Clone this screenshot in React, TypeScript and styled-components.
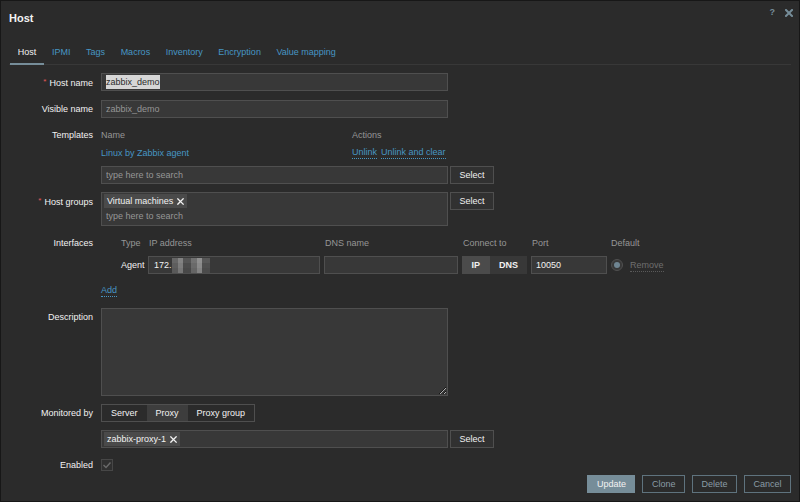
import React from 'react'
import styled, { createGlobalStyle, css } from 'styled-components'

const GlobalStyle = createGlobalStyle`
   html, body {
      margin: 0;
      padding: 0;
      background: #2b2b2b;
   }
   body {
      font-family: "Liberation Sans", Arial, sans-serif;
      font-size: 9px;
      color: #f2f2f2;
   }
   * { box-sizing: border-box; }
`

const tabs = ['Host', 'IPMI', 'Tags', 'Macros', 'Inventory', 'Encryption', 'Value mapping']

function CloseIcon({ size = 8, color = '#768d99', width = 2 }: { size?: number; color?: string; width?: number }) {
   return (
      <svg width={size} height={size} viewBox="0 0 8 8">
         <path d="M1 1 L7 7 M7 1 L1 7" stroke={color} strokeWidth={width} strokeLinecap="square" />
      </svg>
   )
}

function Tag({ label }: { label: string }) {
   return (
      <TagChip>
         {label}
         <CloseIcon size={7} color="#f2f2f2" width={1.6} />
      </TagChip>
   )
}

export default function App() {
   return (
      <>
         <GlobalStyle />
         <Dialog>
            <Header>
               <Title>Host</Title>
               <HeaderActions>
                  <HelpMark>?</HelpMark>
                  <CloseIcon />
               </HeaderActions>
            </Header>

            <TabList>
               {tabs.map((t, i) => (
                  <Tab key={t} $active={i === 0}>{t}</Tab>
               ))}
            </TabList>

            <Form>
               <Label><Required>*</Required>Host name</Label>
               <SelectedBox><Selection>zabbix_demo</Selection></SelectedBox>

               <Label>Visible name</Label>
               <TextInput readOnly placeholder="zabbix_demo" />

               <Label>Templates</Label>
               <div>
                  <TemplateGrid>
                     <HeadCell>Name</HeadCell>
                     <HeadCell>Actions</HeadCell>
                     <TemplateLink>Linux by Zabbix agent</TemplateLink>
                     <ActionLinks>
                        <DottedLink>Unlink</DottedLink>
                        <DottedLink>Unlink and clear</DottedLink>
                     </ActionLinks>
                  </TemplateGrid>
                  <FieldRow $top={4}>
                     <TextInput readOnly placeholder="type here to search" />
                     <SelectButton>Select</SelectButton>
                  </FieldRow>
               </div>

               <Label><Required>*</Required>Host groups</Label>
               <FieldRow>
                  <MultiSelect>
                     <TagRow><Tag label="Virtual machines" /></TagRow>
                     <MultiPlaceholder>type here to search</MultiPlaceholder>
                  </MultiSelect>
                  <SelectButton>Select</SelectButton>
               </FieldRow>

               <Label>Interfaces</Label>
               <InterfaceGrid>
                  <HeadCell $indent={20}>Type</HeadCell>
                  <HeadCell $indent={1}>IP address</HeadCell>
                  <HeadCell $indent={1}>DNS name</HeadCell>
                  <HeadCell $indent={1}>Connect to</HeadCell>
                  <HeadCell $indent={1}>Port</HeadCell>
                  <HeadCell>Default</HeadCell>

                  <TypeCell>Agent</TypeCell>
                  <FakeInput>172.<Censor /></FakeInput>
                  <TextInput readOnly defaultValue="" />
                  <Toggle>
                     <ToggleItem $active>IP</ToggleItem>
                     <ToggleItem>DNS</ToggleItem>
                  </Toggle>
                  <TextInput readOnly defaultValue="10050" />
                  <DefaultCell>
                     <Radio />
                     <RemoveLink>Remove</RemoveLink>
                  </DefaultCell>
               </InterfaceGrid>

               <span />
               <AddRow><DottedLink>Add</DottedLink></AddRow>

               <Label>Description</Label>
               <TextArea readOnly />

               <Label>Monitored by</Label>
               <Segmented>
                  <Segment>Server</Segment>
                  <Segment $active>Proxy</Segment>
                  <Segment>Proxy group</Segment>
               </Segmented>

               <span />
               <FieldRow>
                  <MultiSelect $single>
                     <TagRow><Tag label="zabbix-proxy-1" /></TagRow>
                  </MultiSelect>
                  <SelectButton>Select</SelectButton>
               </FieldRow>

               <Label>Enabled</Label>
               <CheckRow>
                  <CheckBox>
                     <svg width="10" height="10" viewBox="0 0 10 10">
                        <path d="M1.5 5 L4 7.5 L8.5 2.5" fill="none" stroke="#6a6a6a" strokeWidth="1.4" />
                     </svg>
                  </CheckBox>
               </CheckRow>
            </Form>

            <Footer>
               <FooterButton $primary>Update</FooterButton>
               <FooterButton>Clone</FooterButton>
               <FooterButton>Delete</FooterButton>
               <FooterButton>Cancel</FooterButton>
            </Footer>
         </Dialog>
      </>
   )
}


const Dialog = styled.div`
   width: 800px;
   height: 502px;
   display: flex;
   flex-direction: column;
   background: #2b2b2b;
   border: 1px solid #171717;
   overflow: hidden;
`

const Header = styled.div`
   display: flex;
   justify-content: space-between;
   align-items: flex-start;
   height: 40px;
   padding: 0 6px 0 8px;
`

const Title = styled.h4`
   margin: 9px 0 0;
   font-size: 11px;
   line-height: 16px;
   font-weight: bold;
   color: #f2f2f2;
`

const HeaderActions = styled.div`
   display: flex;
   align-items: center;
   gap: 10px;
   margin-top: 7px;
   height: 9px;
`

const HelpMark = styled.span`
   font-size: 9px;
   font-weight: bold;
   line-height: 9px;
   color: #768d99;
`

const TabList = styled.div`
   display: flex;
   margin: 0 8px;
   padding-left: 1px;
   border-bottom: 1px solid #383838;
`

const Tab = styled.div<{ $active?: boolean }>`
   height: 24px;
   line-height: 22px;
   padding: 0 7.8px;
   margin-bottom: -1px;
   border-bottom: 2px solid ${p => (p.$active ? '#768d99' : 'transparent')};
   color: ${p => (p.$active ? '#f2f2f2' : '#4796c4')};
   white-space: nowrap;
`

const Form = styled.div`
   display: grid;
   grid-template-columns: 84px 1fr;
   column-gap: 8px;
   row-gap: 8px;
   align-items: start;
   padding: 8px 8px 0;
`

const Label = styled.div`
   text-align: right;
   line-height: 18px;
   white-space: nowrap;
   color: #f2f2f2;
`

const Required = styled.span`
   color: #e45959;
   font-size: 8px;
   vertical-align: 2px;
   margin-right: 3px;
`

const fieldCss = css`
   height: 18px;
   border: 1px solid #4f4f4f;
   background: #383838;
   color: #f2f2f2;
   font-family: inherit;
   font-size: 9px;
   padding: 0 4px;
   outline: none;
`

const TextInput = styled.input`
   ${fieldCss};
   width: 100%;
   max-width: 347px;
   &::placeholder { color: #969696; }
`

const SelectedBox = styled.div`
   ${fieldCss};
   width: 347px;
   display: flex;
   align-items: center;
`

const Selection = styled.span`
   background: #d6d6d6;
   color: #2b2b2b;
   line-height: 14px;
`

const FakeInput = styled.div`
   ${fieldCss};
   display: flex;
   align-items: center;
   padding-left: 5px;
`

const Censor = styled.span`
   display: inline-block;
   width: 38px;
   height: 15px;
   background:
      linear-gradient(180deg, rgba(255,255,255,0.05) 0 5px, transparent 5px 10px, rgba(0,0,0,0.05) 10px),
      linear-gradient(90deg, #5e5e5e 0 6px, #7c7c7c 6px 11px, #4c4c4c 11px 19px, #6a6a6a 19px 25px, #8a8a8a 25px 30px, #4f4f4f 30px 38px);
`

const FieldRow = styled.div<{ $top?: number }>`
   display: flex;
   align-items: flex-start;
   gap: 2px;
   margin-top: ${p => p.$top || 0}px;
`

const SelectButton = styled.button`
   height: 18px;
   width: 44px;
   padding: 0;
   border: 1px solid #4f4f4f;
   background: #313131;
   color: #f2f2f2;
   font-family: inherit;
   font-size: 9px;
`

const TemplateGrid = styled.div`
   display: grid;
   grid-template-columns: 251px 1fr;
   width: 347px;
   line-height: 18px;
`

const HeadCell = styled.div<{ $indent?: number }>`
   color: #969696;
   line-height: 18px;
   padding-left: ${p => p.$indent || 0}px;
   white-space: nowrap;
`

const TemplateLink = styled.span`
   color: #4796c4;
`

const ActionLinks = styled.div`
   display: flex;
   align-items: center;
   gap: 4px;
`

const DottedLink = styled.span`
   color: #4796c4;
   line-height: 11px;
   border-bottom: 1px dotted #4796c4;
`

const MultiSelect = styled.div<{ $single?: boolean }>`
   width: 347px;
   min-height: 18px;
   border: 1px solid #4f4f4f;
   background: #383838;
   padding: 1px 2px;
`

const TagRow = styled.div`
   display: flex;
   gap: 3px;
`

const TagChip = styled.span`
   display: inline-flex;
   align-items: center;
   gap: 4px;
   height: 14px;
   padding: 0 3px;
   background: #4a4a4a;
   color: #f2f2f2;
   white-space: nowrap;
`

const MultiPlaceholder = styled.div`
   line-height: 16px;
   padding-left: 2px;
   color: #969696;
`

const InterfaceGrid = styled.div`
   display: grid;
   grid-template-columns: 43px 172px 134px 65px 76px auto;
   column-gap: 4px;
   row-gap: 4px;
   align-items: center;
`

const TypeCell = styled.div`
   padding-left: 20px;
   line-height: 18px;
   white-space: nowrap;
`

const Toggle = styled.div`
   display: flex;
   height: 18px;
   background: #383838;
`

const ToggleItem = styled.span<{ $active?: boolean }>`
   padding: 0 9.5px;
   line-height: 18px;
   font-weight: bold;
   color: #f2f2f2;
   background: ${p => (p.$active ? '#4b4b4b' : 'transparent')};
`

const DefaultCell = styled.div`
   display: flex;
   align-items: center;
   gap: 7px;
`

const Radio = styled.span`
   position: relative;
   width: 12px;
   height: 12px;
   border-radius: 50%;
   border: 1px solid #4f4f4f;
   background: #383838;
   &::after {
      content: '';
      position: absolute;
      left: 2px;
      top: 2px;
      width: 6px;
      height: 6px;
      border-radius: 50%;
      background: #6f8592;
   }
`

const RemoveLink = styled.span`
   color: #6f6f6f;
   line-height: 12px;
   border-bottom: 1px dotted #5a5a5a;
`

const AddRow = styled.div`
   height: 18px;
   display: flex;
   align-items: center;
`

const TextArea = styled.textarea`
   width: 347px;
   height: 88px;
   margin: 0;
   border: 1px solid #4f4f4f;
   background: #383838;
   resize: vertical;
   outline: none;
   display: block;
   color-scheme: dark;
`

const Segmented = styled.div`
   display: flex;
   width: max-content;
   border: 1px solid #4f4f4f;
   height: 18px;
`

const Segment = styled.span<{ $active?: boolean }>`
   padding: 0 9px;
   line-height: 16px;
   background: ${p => (p.$active ? '#3d3d3d' : '#2b2b2b')};
   color: #f2f2f2;
   white-space: nowrap;
`

const CheckRow = styled.div`
   height: 18px;
   display: flex;
   align-items: center;
`

const CheckBox = styled.span`
   display: flex;
   align-items: center;
   justify-content: center;
   width: 12px;
   height: 12px;
   border: 1px solid #474747;
   background: #303030;
`

const Footer = styled.div`
   display: flex;
   justify-content: flex-end;
   gap: 7px;
   margin-top: auto;
   padding: 0 8px 8px;
`

const FooterButton = styled.button<{ $primary?: boolean }>`
   height: 18px;
   padding: 0 8.5px;
   font-family: inherit;
   font-size: 9px;
   border: 1px solid ${p => (p.$primary ? '#768d99' : '#5f737e')};
   background: ${p => (p.$primary ? '#768d99' : 'transparent')};
   color: ${p => (p.$primary ? '#f2f2f2' : '#8a9ba5')};
`
